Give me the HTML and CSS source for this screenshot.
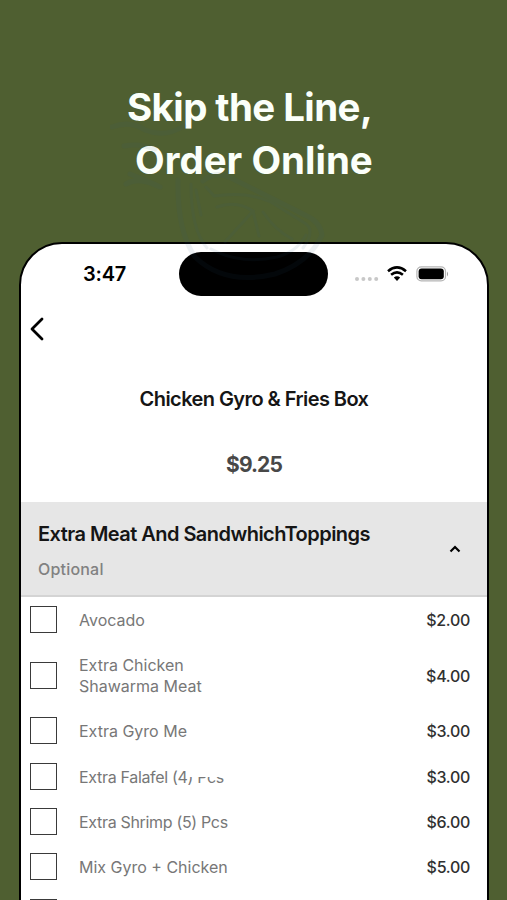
FILE: index.html
```html
<!DOCTYPE html>
<html lang="en">
<head>
<meta charset="utf-8">
<title>Skip the Line, Order Online</title>
<link rel="stylesheet" href="styles.css">
</head>
<body>
<div class="promo">
  <h1 class="headline"><span class="line line-one">Skip the Line,</span><span class="line line-two">Order Online</span></h1>
  <main class="phone">
    <header class="status">
      <span class="time">3:47</span>
      <span class="island"></span>
      <span class="indicators">
        <svg class="dots" width="24" height="4" viewBox="0 0 24 4"><g fill="#c8c8c8"><circle cx="2" cy="2" r="2"/><circle cx="8.4" cy="2" r="2"/><circle cx="14.8" cy="2" r="2"/><circle cx="21.2" cy="2" r="2"/></g></svg>
        <svg class="wifi" width="20" height="15" viewBox="0 0 20 15"><g fill="none" stroke="#000" stroke-width="2.6"><path d="M1 5.2Q10-2.4 19 5.2"/><path d="M4.1 8.8Q10 3.9 15.9 8.8"/></g><path d="M6.8 11.6Q10 8.9 13.2 11.6L10 14.9Z"/></svg>
        <svg class="battery" width="33" height="16" viewBox="0 0 33 16"><rect x=".9" y=".9" width="28.6" height="14" rx="4.4" fill="#fff" stroke="#b5b5b5" stroke-width="1.2"/><rect x="2.6" y="2.6" width="25.2" height="10.6" rx="3"/><path d="M31 5.5Q33 8 31 10.4Z" fill="#999"/></svg>
      </span>
    </header>
    <nav class="nav"><svg width="16" height="24" viewBox="0 0 16 24"><path d="M13 2L3 12L13 22" fill="none" stroke="#000" stroke-width="2.8" stroke-linecap="round" stroke-linejoin="round"/></svg></nav>
    <h2 class="item-name">Chicken Gyro &amp; Fries Box</h2>
    <p class="item-price">$9.25</p>
    <section class="group">
      <div class="group-text"><h3 class="group-title">Extra Meat And SandwhichToppings</h3><p class="group-note">Optional</p></div>
      <svg class="caret" width="12" height="8" viewBox="0 0 12 8"><path d="M1.5 6.5L6 2L10.5 6.5" fill="none" stroke="#000" stroke-width="2.2"/></svg>
    </section>
    <ul class="options">
      <li class="option"><span class="box"></span><span class="label">Avocado</span><span class="cost">$2.00</span></li>
      <li class="option tall"><span class="box"></span><span class="label">Extra Chicken<br>Shawarma Meat</span><span class="cost">$4.00</span></li>
      <li class="option"><span class="box"></span><span class="label">Extra Gyro Me</span><span class="cost">$3.00</span></li>
      <li class="option"><span class="box"></span><span class="label snug">Extra Falafel (4) Pcs<i class="patch"></i></span><span class="cost">$3.00</span></li>
      <li class="option"><span class="box"></span><span class="label snug">Extra Shrimp (5) Pcs</span><span class="cost">$6.00</span></li>
      <li class="option"><span class="box"></span><span class="label">Mix Gyro + Chicken</span><span class="cost">$5.00</span></li>
      <li class="option"><span class="box"></span></li>
    </ul>
  </main>
  <svg class="watermark" width="230" height="170" viewBox="110 120 230 170" fill="none" stroke="#2c5a80" stroke-linecap="round">
    <path d="M112 127Q130 120 145 130Q165 138 184 126M124 146Q140 143 155 149M126 184Q139 176 160 187M130 174L154 184" stroke-width="5"/>
    <path d="M178 180Q177 231 195 257Q225 286 275 274Q309 263 322 235Q320 222 307 216L231 178Q215 170 203 181" stroke-width="5"/>
    <path d="M191 184Q191 230 207 248M206 187L214 196Q247 191 271 202L303 222Q317 229 303 248M217 207Q236 200 253 211L225 242M263 212Q275 230 292 239M211 249Q240 265 277 257Q297 252 306 235M253 211L259 236M196 190L201 215" stroke-width="3"/>
  </svg>
</div>
</body>
</html>
```
FILE: styles.css
```css
* { box-sizing: border-box; }
body { margin: 0; background: #4f5f31; font-family: Inter, "Liberation Sans", sans-serif; }
h1, h2, h3, p, ul { margin: 0; padding: 0; }
.promo { position: relative; height: 900px; overflow: hidden; padding-top: 81px; }
.headline { height: 161px; color: #fbfffa; font-size: 38.5px; line-height: 53px; font-weight: 650; white-space: nowrap; }
.line { display: block; }
.line-one { padding-left: 127px; letter-spacing: -.6px; }
.line-two { padding-left: 135px; letter-spacing: 0; }
.phone { width: 470px; height: 760px; margin-left: 19px; border: 2px solid #000; border-radius: 43px 43px 0 0; background: #fff; overflow: hidden; }
.status { display: flex; height: 60px; padding-top: 8px; }
.time { width: 158px; padding: 1px 0 0 62px; font-size: 20px; line-height: 43px; font-weight: 600; letter-spacing: -.2px; }
.island { width: 149px; height: 44px; border-radius: 22px; background: #000; }
.indicators { display: flex; align-items: flex-start; padding-left: 27px; }
.dots { margin-top: 25px; }
.wifi { margin: 14px 0 0 8px; }
.battery { margin: 13.5px 0 0 9px; }
.nav { height: 78px; padding: 12.5px 0 0 8px; }
.item-name { height: 34px; text-align: center; font-size: 20px; line-height: 34px; font-weight: 600; letter-spacing: -.57px; color: #151515; }
.item-price { margin-top: 31px; padding-top: 1px; height: 55px; text-align: center; font-size: 21px; line-height: 34px; font-weight: 650; letter-spacing: -.9px; color: #484848; }
.group { display: flex; justify-content: space-between; align-items: center; height: 95px; padding: 0 26px 0 17px; border-bottom: 2px solid #d4d4d4; background: #e6e6e6; }
.group-text { padding-top: 6px; }
.group-title { font-size: 20px; line-height: 35px; font-weight: 600; letter-spacing: -.54px; color: #151515; white-space: nowrap; }
.group-note { font-size: 16px; line-height: 34px; font-weight: 500; letter-spacing: .2px; color: #818181; }
.options { list-style: none; }
.option { display: flex; align-items: center; height: 45.3px; padding: 0 17px 0 9px; }
.option.tall { height: 66px; }
.box { width: 27px; height: 27px; border: 1.5px solid #3a3a3a; flex: none; }
.label { position: relative; flex: 1; margin-left: 22px; padding-top: 1.8px; font-size: 16px; line-height: 21px; color: #777; white-space: nowrap; }
.label.snug { letter-spacing: -.32px; }
.cost { padding-top: 1.8px; font-size: 16px; line-height: 21px; font-weight: 500; letter-spacing: -.3px; color: #303030; }
.patch { position: absolute; left: 108px; top: 0; width: 40px; height: 12px; background: #fff; }
.watermark { position: absolute; left: 110px; top: 120px; opacity: .08; }
```
